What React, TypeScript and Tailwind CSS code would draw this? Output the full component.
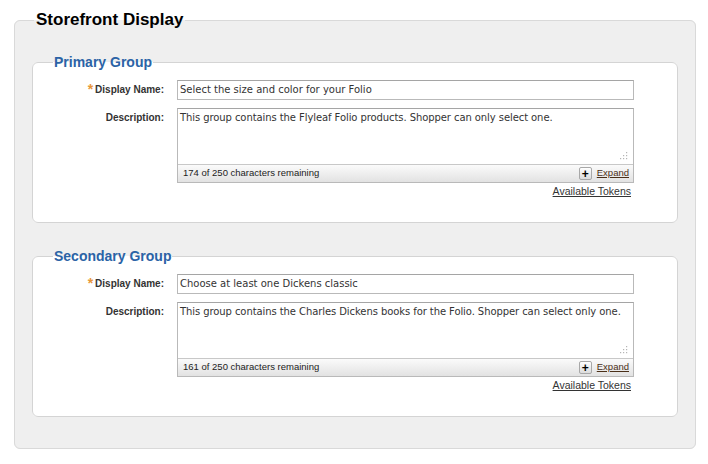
import React from 'react';

interface GroupProps {
  title: string;
  displayName: string;
  description: string;
  remaining: number;
  className?: string;
}

const labelFont = { fontFamily: '"Liberation Sans", Arial, sans-serif' };
const inputFont = { fontFamily: '"DejaVu Sans", Verdana, sans-serif' };

const ResizeGrip: React.FC = () => (
  <svg width="9" height="9" viewBox="0 0 9 9" className="absolute right-[5px] bottom-[4px]">
    {[
      [7, 1],
      [4, 4],
      [7, 4],
      [1, 7],
      [4, 7],
      [7, 7],
    ].map(([x, y], i) => (
      <rect key={i} x={x} y={y} width="1.2" height="1.2" fill="#b5b5b5" />
    ))}
  </svg>
);

const GroupFieldset: React.FC<GroupProps> = ({ title, displayName, description, remaining, className }) => {
  return (
    <fieldset
      className={`w-[646px] rounded-[6px] border border-[#d4d4d4] bg-white pr-[42px] pb-[24px] ${className ?? ''}`}
    >
      <legend
        className="ml-[20px] px-[1px] text-[14px] leading-[18px] font-bold text-[#2b63a6]"
        style={labelFont}
      >
        {title}
      </legend>

      <div className="grid grid-cols-[131px_457px] gap-x-[13px] mt-[9px]">
        {/* Display name */}
        <div className="flex justify-end items-start pt-[3px]" style={labelFont}>
          <span className="text-[14px] leading-[10px] font-bold text-[#e8963a] mr-[2px] mt-[1px]">*</span>
          <span className="text-[10px] leading-[14px] font-bold text-[#333]">Display Name:</span>
        </div>
        <div
          className="h-[20px] border border-[#b9b9b9] border-t-[#a5a5a5] bg-white px-[2px] text-[10px] leading-[18px] text-[#333] whitespace-nowrap overflow-hidden"
          style={inputFont}
        >
          {displayName}
        </div>

        {/* Description */}
        <div className="flex justify-end items-start pt-[3px] mt-[8px]" style={labelFont}>
          <span className="text-[10px] leading-[14px] font-bold text-[#333]">Description:</span>
        </div>
        <div className="mt-[8px]">
          <div className="border border-[#b9b9b9] border-t-[#a5a5a5]">
            <div
              className="relative h-[56px] bg-white px-[2px] pt-[2px] text-[10px] leading-[14px] tracking-[-0.08px] text-[#333] border-b border-[#c8c8c8]"
              style={inputFont}
            >
              {description}
              <ResizeGrip />
            </div>
            <div
              className="h-[17px] flex items-center justify-between pl-[5px] pr-[4px] bg-gradient-to-b from-[#fbfbfb] to-[#e2e2e2]"
              style={labelFont}
            >
              <span className="text-[9.5px] text-[#222]">{remaining} of 250 characters remaining</span>
              <span className="flex items-center gap-[5px]">
                <span className="w-[13px] h-[13px] flex items-center justify-center border border-[#a8a8a8] rounded-[2px] bg-gradient-to-b from-white to-[#dcdcdc] text-[12px] leading-none font-bold text-black">
                  +
                </span>
                <span className="text-[9.5px] text-[#4a2f18] underline">Expand</span>
              </span>
            </div>
          </div>
          <div className="flex justify-end pr-[3px] pt-[1px]">
            <span className="text-[10.5px] leading-[14px] text-[#333] underline" style={labelFont}>
              Available Tokens
            </span>
          </div>
        </div>
      </div>
    </fieldset>
  );
};

const App: React.FC = () => {
  return (
    <div className="w-[708px] h-[464px] bg-white pt-[10px]">
      <fieldset className="ml-[14px] w-[682px] rounded-[6px] border border-[#d9d9d9] bg-[#efefef] px-[17px] pb-[31px]">
        <legend
          className="ml-[2px] px-[2px] text-[17px] leading-[20px] font-bold text-black"
          style={labelFont}
        >
          Storefront Display
        </legend>

        <GroupFieldset
          className="mt-[23px]"
          title="Primary Group"
          displayName="Select the size and color for your Folio"
          description="This group contains the Flyleaf Folio products. Shopper can only select one."
          remaining={174}
        />
        <GroupFieldset
          className="mt-[24px]"
          title="Secondary Group"
          displayName="Choose at least one Dickens classic"
          description="This group contains the Charles Dickens books for the Folio. Shopper can select only one."
          remaining={161}
        />
      </fieldset>
    </div>
  );
};

export default App;
